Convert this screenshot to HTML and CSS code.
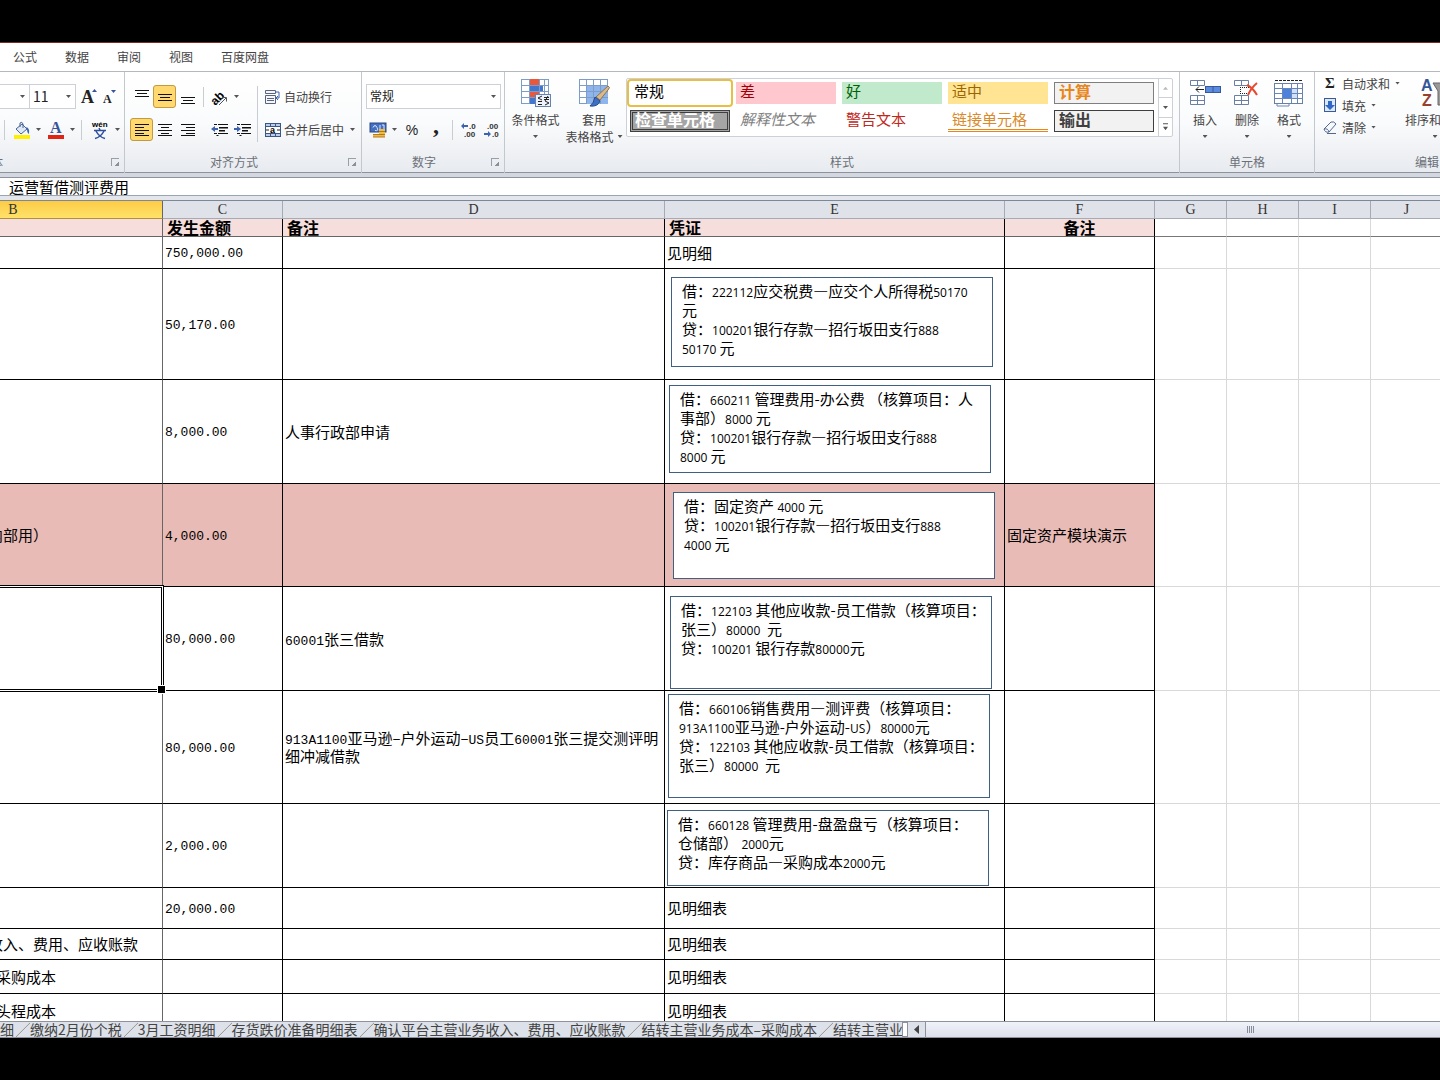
FILE: index.html
```html
<!DOCTYPE html>
<html lang="zh-CN">
<head>
<meta charset="utf-8">
<title>运营暂借测评费用</title>
<link rel="stylesheet" href="styles.css">
</head>
<body>
<div class="window">
  <nav class="menu">
    <a href="#">公式</a><a href="#">数据</a><a href="#">审阅</a><a href="#">视图</a><a href="#">百度网盘</a>
  </nav>

  <div class="ribbon">
    <section class="group g-font">
      <div class="rows">
        <div class="row">
          <span class="combo combo-face"><select aria-label="字体"><option></option></select><i class="caret"></i></span>
          <span class="combo combo-size"><select aria-label="字号"><option>11</option></select><i class="caret"></i></span>
          <button class="tool" aria-label="增大字号"><svg width="18" height="18"><text x="1" y="15" class="glyph-a" font-size="18">A</text><path d="M12 4l2.500-3 2.500 3z" fill="#35549a"/></svg></button>
          <button class="tool" aria-label="减小字号"><svg width="16" height="18"><text x="1" y="15" class="glyph-a" font-size="12">A</text><path d="M9 2h5l-2.500 3z" fill="#35549a"/></svg></button>
        </div>
        <div class="row">
          <i class="sep"></i>
          <button class="tool split" aria-label="填充颜色"><svg width="18" height="18"><path d="M3 8l6-5 5 5-6 5z" fill="#dfe8f5" stroke="#4a6496"/><path d="M7 6V2q2-2 3 1v4" fill="none" stroke="#4a6496"/><path d="M13 6q4 1 3 7q-2-1-2-5z" fill="#3565b5"/><rect x="1" y="14" width="16" height="4" fill="#ffef00"/></svg><i class="caret"></i></button>
          <button class="tool split" aria-label="字体颜色"><svg width="18" height="18"><text x="3" y="12" class="glyph-a blue" font-size="16">A</text><rect x="1" y="14" width="16" height="4" fill="#e02313"/></svg><i class="caret"></i></button>
          <i class="sep"></i>
          <button class="tool split" aria-label="拼音指南"><svg width="20" height="18"><text x="2" y="6" font-size="8" font-weight="bold" class="latin">wén</text><path d="M9 7l1 2M4 9.500h12M6 10q3 6 9 7.500M14 10q-3 6-9 7.500" fill="none" stroke="#2c4f9e" stroke-width="1.500"/></svg><i class="caret"></i></button>
        </div>
      </div>
      <footer class="caption cut">体<i class="launch"></i></footer>
    </section>

    <section class="group g-align">
      <div class="split-rows">
        <div class="rows">
          <div class="row">
            <button class="tool sq" aria-label="顶端对齐"><svg width="14" height="14"><path d="M0 .5h14M2 3.500h10M0 6.500h14" class="ln"/></svg></button>
            <button class="tool sq on" aria-label="垂直居中"><svg width="14" height="14"><path d="M0 4.500h14M2 7.500h10M0 10.500h14" class="ln"/></svg></button>
            <button class="tool sq" aria-label="底端对齐"><svg width="14" height="14"><path d="M0 7.500h14M2 10.500h10M0 13.500h14" class="ln"/></svg></button>
            <i class="sep"></i>
            <button class="tool split orient" aria-label="方向"><svg width="18" height="18"><text x="0" y="14" font-size="12" font-weight="bold" class="latin" transform="rotate(-45 7 11)">ab</text><path d="M8 17l7-7M11 9.500h4.500v4" fill="none" stroke="#555"/></svg><i class="caret"></i></button>
          </div>
          <div class="row">
            <button class="tool sq on" aria-label="左对齐"><svg width="14" height="14"><path d="M0 1.500h14M0 4.500h9M0 7.500h14M0 10.500h9M0 12.500h14" class="ln"/></svg></button>
            <button class="tool sq" aria-label="居中"><svg width="14" height="14"><path d="M0 1.500h14M3 4.500h8M0 7.500h14M3 10.500h8M0 12.500h14" class="ln"/></svg></button>
            <button class="tool sq" aria-label="右对齐"><svg width="14" height="14"><path d="M0 1.500h14M5 4.500h9M0 7.500h14M5 10.500h9M0 12.500h14" class="ln"/></svg></button>
            <i class="space"></i>
            <button class="tool sq" aria-label="减少缩进量"><svg width="17" height="14"><path d="M3 1.500h3M7 1.500h10M8 4.500h9M8 7.500h6M3 10.500h3M7 10.500h10M5.500 12.500h2" class="ln"/><path d="M8 5h9M8 8h6" class="ln"/><path d="M0 6l4-3v2h3v2H4v2z" fill="#3b63b0"/></svg></button>
            <button class="tool sq" aria-label="增加缩进量"><svg width="17" height="14"><path d="M3 1.500h3M7 1.500h10M8 4.500h9M8 7.500h6M3 10.500h3M7 10.500h10M5.500 12.500h2" class="ln"/><path d="M8 5h9M8 8h6" class="ln"/><path d="M7 6L3 3v2H0v2h3v2z" fill="#3b63b0"/></svg></button>
          </div>
        </div>
        <i class="sep tall"></i>
        <div class="rows">
          <div class="row"><button class="tool wide"><svg width="16" height="16"><path d="M.5 1.500h10v3H.5zM.5 6.500h10v8H.5z" fill="#f4f6fa" stroke="#59647a"/><path d="M2 9.500h7M2 11.500h7" stroke="#59647a"/><path d="M10 3h4v6h-3M13 7l-2 2 2 2" fill="none" stroke="#3b63b0"/></svg>自动换行</button></div>
          <div class="row"><button class="tool wide"><svg width="16" height="16"><rect x=".5" y="1.500" width="15" height="13" fill="#b9cdec" stroke="#3d5583"/><path d="M0 4.500h16M0 11.500h16M5.500 1v4M10.500 1v4M5.500 11v4M10.500 11v4" stroke="#3d5583"/><rect x="1" y="5" width="14" height="6" fill="#fff"/><path d="M1 8h3M12 8h3" stroke="#222"/><text x="5" y="11" font-size="9" font-weight="bold" class="latin">a</text></svg>合并后居中<i class="caret"></i></button></div>
        </div>
      </div>
      <footer class="caption">对齐方式<i class="launch"></i></footer>
    </section>

    <section class="group g-number">
      <div class="rows">
        <div class="row">
          <span class="combo combo-num"><select aria-label="数字格式"><option>常规</option></select><i class="caret"></i></span>
        </div>
        <div class="row">
          <button class="tool split" aria-label="会计数字格式"><svg width="18" height="17"><rect x="1" y="2" width="16" height="9" fill="#4470c4" stroke="#29477f"/><path d="M4 6.500q2-4 4 0t-2 3M11 4v5M13 4h2v4" fill="none" stroke="#dce8ff"/><path d="M10 8h6v8h-6zM4 13h6v3H4z" fill="#eebb45"/><path d="M4 13.500h6M4 16h12M10 10.500h6M10 13.500h6" fill="none" stroke="#b47a1a"/></svg><i class="caret"></i></button>
          <button class="tool pct" aria-label="百分比样式">%</button>
          <button class="tool comma" aria-label="千位分隔样式">,</button>
          <i class="sep"></i>
          <button class="tool sq" aria-label="增加小数位数"><svg width="17" height="14"><text x="9" y="6" class="dec">.0</text><text x="4" y="14" class="dec">.00</text><path d="M1 3l3-3v2h4v2H4v2z" fill="#3b63b0"/></svg></button>
          <button class="tool sq" aria-label="减少小数位数"><svg width="17" height="14"><text x="4" y="6" class="dec">.00</text><text x="9" y="14" class="dec">.0</text><path d="M8 11L5 8v2H1v2h4v2z" fill="#3b63b0"/></svg></button>
        </div>
      </div>
      <footer class="caption">数字<i class="launch"></i></footer>
    </section>

    <section class="group g-styles">
      <div class="bigs">
        <button class="big cond"><svg width="30" height="29"><rect x=".5" y=".5" width="27" height="24" fill="#fff" stroke="#7d9cc8"/><path d="M9 0h10v6H9zM9 12h10v6H9z" fill="#e9573d"/><path d="M9 6h13v6H9zM9 18h6v7H9z" fill="#4377cf"/><path d="M0 6.500h28M0 12.500h28M0 18.500h28M8.500 0v25M18.500 0v25M23.500 0v25" stroke="#7d9cc8"/><rect x="14.500" y="15.500" width="15" height="12" fill="#eef3fb" stroke="#6682ae"/><path d="M21 17l-4 2 4 2M17 22.500h4M17 25.500h4M23 18.500h5M23 20.500h5M27 17l-3 5M24 22l4 2-4 2" fill="none" stroke="#222"/></svg><span>条件格式</span><i class="caret"></i></button>
        <button class="big tbl"><svg width="31" height="29"><rect x=".5" y=".5" width="28" height="24" fill="#fff" stroke="#7d9cc8"/><path d="M7 6h22v19H7z" fill="#8fb6ec"/><path d="M0 6.500h29M0 12.500h29M0 18.500h29M7.500 0v25M14.500 0v25M21.500 0v25" stroke="#7d9cc8"/><path d="M29 7q3 1 0 4l-8 10-4-3z" fill="#d9b98a" stroke="#8a7453"/><path d="M16 18l5 4q-2 6-10 5q4-3 5-9z" fill="#3f6fc2" stroke="#274a8d"/></svg><span>套用</span><span>表格格式<i class="caret"></i></span></button>
      </div>
      <div class="gallery">
        <div class="swatches">
          <button class="sw sel">常规</button><button class="sw bad">差</button><button class="sw good">好</button><button class="sw mid">适中</button><button class="sw calc">计算</button>
          <button class="sw check">检查单元格</button><button class="sw expl">解释性文本</button><button class="sw warn">警告文本</button><button class="sw link">链接单元格</button><button class="sw out">输出</button>
        </div>
        <div class="spin"><button aria-label="上一行"><i class="caret up"></i></button><button aria-label="下一行"><i class="caret"></i></button><button aria-label="其他"><i class="caret more"></i></button></div>
      </div>
      <footer class="caption">样式</footer>
    </section>

    <section class="group g-cells">
      <div class="bigs">
        <button class="big"><svg width="31" height="29"><path d="M.5 1.500h14v5H.5zM7.500 1v5M.5 16.500h14v9H.5zM7.500 16v10M0 21.500h15" fill="#fff" stroke="#6a7fa5"/><rect x="15.500" y="7.500" width="15" height="6" fill="#5b8bdc" stroke="#34599f"/><path d="M23 7v7" stroke="#34599f"/><path d="M6 10.500h8M9 7.500l-3 3 3 3" fill="none" stroke="#222"/></svg><span>插入</span><i class="caret"></i></button>
        <button class="big"><svg width="26" height="29"><path d="M.5 1.500h14v5H.5zM7.500 1v5M.5 16.500h14v9H.5zM7.500 16v10M0 21.500h15" fill="#fff" stroke="#6a7fa5"/><path d="M6 8.500h9M6 14.500h9M6.500 8v7" stroke="#222" stroke-dasharray="1 1"/><path d="M13 6q6 3 10 10M23 4q-6 5-9 12" fill="none" stroke="#e7492f" stroke-width="2"/></svg><span>删除</span><i class="caret"></i></button>
        <button class="big"><svg width="30" height="29"><path d="M1 1.500h28" stroke="#222" stroke-dasharray="3 1"/><rect x=".5" y="4.500" width="28" height="20" fill="#fff" stroke="#6a7fa5"/><path d="M8 9h16v11H8z" fill="#cfe0f8"/><path d="M9 9h8v11H9z" fill="#4d82dc"/><path d="M0 9.500h29M0 14.500h8M17 14.500h12M0 19.500h29M8.500 4v20M17.500 4v20M23.500 4v20M3 24v3h12v-3" fill="none" stroke="#6a86b8"/></svg><span>格式</span><i class="caret"></i></button>
      </div>
      <footer class="caption">单元格</footer>
    </section>

    <section class="group g-edit">
      <div class="edits">
        <div class="list">
          <button class="tool line"><svg width="14" height="14"><text x="2" y="12" font-size="15" class="glyph-a">Σ</text></svg>自动求和<i class="caret"></i></button>
          <button class="tool line"><svg width="14" height="14"><rect x="1.500" y=".5" width="11" height="13" fill="#dce8fa" stroke="#3b5b96"/><path d="M5 3h4v4h3l-5 5-5-5h3z" fill="#2f67c7"/></svg>填充<i class="caret"></i></button>
          <button class="tool line"><svg width="14" height="14"><path d="M1 9l7-7q3-1 5 2l-7 8q-4 1-5-3z" fill="#f6f9fe" stroke="#55688c"/><path d="M1 9q4-1 5 3M4 13.500h9" fill="none" stroke="#55688c"/></svg>清除<i class="caret"></i></button>
        </div>
        <button class="big sort"><svg width="30" height="29"><text x="1" y="12" font-size="16" font-weight="bold" class="latin blue">A</text><text x="2" y="27" font-size="16" font-weight="bold" class="latin" fill="#974030">Z</text><path d="M13 4h15l-5 8v14h-5V12z" fill="#9a9a9a" stroke="#666"/></svg><span>排序和筛选</span><i class="caret"></i></button>
      </div>
      <footer class="caption">编辑</footer>
    </section>
  </div>

  <div class="formula"><input type="text" aria-label="编辑栏" value="运营暂借测评费用"></div>

  <main class="sheet">
    <table>
      <colgroup><col class="cb"><col class="cc"><col class="cd"><col class="ce"><col class="cf"><col class="cg"><col class="cg"><col class="cg"><col class="cg"></colgroup>
      <thead>
        <tr class="letters"><th class="cur">B</th><th>C</th><th>D</th><th>E</th><th>F</th><th>G</th><th>H</th><th>I</th><th>J</th></tr>
        <tr class="titles"><th></th><th>发生金额</th><th>备注</th><th>凭证</th><th class="mid">备注</th><td></td><td></td><td></td><td></td></tr>
      </thead>
      <tbody>
        <tr class="h32"><td></td><td class="num">750,000.00</td><td></td><td>见明细</td><td></td><td></td><td></td><td></td><td></td></tr>
        <tr class="h111"><td></td><td class="num">50,170.00</td><td></td><td><div class="note n1">借：<b>222112</b>应交税费—应交个人所得税<b>50170</b><br>元<br>贷：<b>100201</b>银行存款—招行坂田支行<b>888</b><br><b>50170 </b> 元</div></td><td></td><td></td><td></td><td></td><td></td></tr>
        <tr class="h104"><td></td><td class="num">8,000.00</td><td>人事行政部申请</td><td><div class="note n2">借：<b>660211</b> 管理费用-办公费 （核算项目：人<br>事部）<b>8000</b> 元<br>贷：<b>100201</b>银行存款—招行坂田支行<b>888</b><br><b>8000 </b> 元</div></td><td></td><td></td><td></td><td></td><td></td></tr>
        <tr class="h103 hot"><td class="tail">内部用）</td><td class="num">4,000.00</td><td></td><td><div class="note n3">借：固定资产 <b>4000</b> 元<br>贷：<b>100201</b>银行存款—招行坂田支行<b>888</b><br><b>4000 </b> 元</div></td><td>固定资产模块演示</td><td></td><td></td><td></td><td></td></tr>
        <tr class="h104"><td class="active"></td><td class="num">80,000.00</td><td><span class="mono">60001</span>张三借款</td><td><div class="note n4">借：<b>122103</b> 其他应收款-员工借款（核算项目：<br>张三）<b>80000</b>&nbsp; 元<br>贷：<b>100201 </b> 银行存款<b>80000</b>元</div></td><td></td><td></td><td></td><td></td><td></td></tr>
        <tr class="h113"><td></td><td class="num">80,000.00</td><td><span class="mono">913A1100</span>亚马逊–户外运动–<span class="mono">US</span>员工<span class="mono">60001</span>张三提交测评明<br>细冲减借款</td><td><div class="note n5">借：<b>660106</b>销售费用—测评费（核算项目：<br><b>913A1100</b>亚马逊-户外运动-<b>US</b>）<b>80000</b>元<br>贷：<b>122103</b> 其他应收款-员工借款（核算项目：<br>张三）<b>80000</b>&nbsp; 元</div></td><td></td><td></td><td></td><td></td><td></td></tr>
        <tr class="h84"><td></td><td class="num">2,000.00</td><td></td><td><div class="note n6">借：<b>660128</b> 管理费用-盘盈盘亏（核算项目：<br>仓储部） <b>2000</b>元<br>贷：库存商品—采购成本<b>2000</b>元</div></td><td></td><td></td><td></td><td></td><td></td></tr>
        <tr class="h41"><td></td><td class="num">20,000.00</td><td></td><td>见明细表</td><td></td><td></td><td></td><td></td><td></td></tr>
        <tr class="h31"><td>确认平台主营业务收入、费用、应收账款</td><td></td><td></td><td>见明细表</td><td></td><td></td><td></td><td></td><td></td></tr>
        <tr class="h34"><td>结转主营业务成本–采购成本</td><td></td><td></td><td>见明细表</td><td></td><td></td><td></td><td></td><td></td></tr>
        <tr class="h34"><td>结转主营业务成本–头程成本</td><td></td><td></td><td>见明细表</td><td></td><td></td><td></td><td></td><td></td></tr>
      </tbody>
    </table>
  </main>

  <div class="bottom">
    <nav class="tabs">
      <a href="#" class="first">明细</a><a href="#">缴纳2月份个税</a><a href="#">3月工资明细</a><a href="#">存货跌价准备明细表</a><a href="#">确认平台主营业务收入、费用、应收账款</a><a href="#">结转主营业务成本–采购成本</a><a href="#">结转主营业务</a>
    </nav>
    <i class="splitter"></i>
    <button class="left" aria-label="向左滚动"><i class="caret west"></i></button>
    <div class="track"><div class="thumb"><i class="grip"></i></div></div>
  </div>
</div>
</body>
</html>
```
FILE: styles.css
```css
* { box-sizing: border-box; }

body {
  margin: 0;
  background: #000;
  font-family: "Noto Sans CJK SC", sans-serif;
  font-size: 12px;
  color: #444;
}

button, select, input { font: inherit; color: inherit; margin: 0; }
button { background: none; border: 0; padding: 0; white-space: nowrap; }
svg { display: block; flex: none; overflow: visible; }
a { color: inherit; text-decoration: none; }

.window {
  height: 100vh;
  padding: 42px 0;
  display: flex;
  flex-direction: column;
  overflow: hidden;
}

/* ribbon tabs */
.menu {
  flex: none;
  height: 30px;
  padding: 0 0 2px 13px;
  display: flex;
  align-items: center;
  gap: 28px;
  background: #fff;
  border-top: 1px solid #7c2a2a;
  border-bottom: 1px solid #b5b8bd;
}

/* ribbon */
.ribbon {
  flex: none;
  display: flex;
  height: 105px;
  border-bottom: 4px solid #d3d7df;
  background: linear-gradient(#fff, #fafbfc 50%, #e7eaef);
  box-shadow: inset 0 -1px #8d929c;
  overflow: hidden;
}
.group {
  flex: none;
  display: flex;
  flex-wrap: wrap;
  align-content: space-between;
  border-right: 1px solid #c3c7ce;
  overflow: hidden;
}
.g-font { width: 125px; }
.g-align { width: 237px; }
.g-number { width: 143px; }
.g-styles { width: 675px; }
.g-cells { width: 135px; }
.g-edit { flex: 1 0 126px; border-right: 0; min-width: 0; }

.caption {
  flex: 0 0 100%;
  height: 21px;
  padding-bottom: 2px;
  display: flex;
  justify-content: center;
  align-items: center;
  color: #6b7078;
}
.caption.cut { justify-content: flex-start; text-indent: -9px; }
.caption .launch { margin-left: auto; }
.g-align .caption { padding-left: 85px; }
.g-number .caption { padding-left: 50px; }
.g-edit .caption { justify-content: flex-start; padding-left: 100px; white-space: nowrap; }
.launch {
  width: 8px;
  height: 8px;
  margin-right: 5px;
  border: 1px solid #9a9ea8;
  border-width: 1px 0 0 1px;
  background: linear-gradient(135deg, transparent 65%, #8b9099 65%);
}

.rows { display: flex; flex-direction: column; gap: 8px; padding-top: 12px; }
.row { display: flex; align-items: center; height: 25px; }
.split-rows { display: flex; }
.g-align .split-rows { padding-left: 5px; }
.g-number .rows { padding-left: 4px; }

.sep { width: 1px; height: 20px; margin: 0 4px; background: #c9ccd2; }
.sep.tall { height: 56px; margin: 14px 7px 0 3px; }
.space { width: 9px; }

.caret {
  width: 5px;
  height: 3px;
  flex: none;
  background: #555;
  clip-path: polygon(0 0, 100% 0, 50% 100%);
}
.caret.up { background: #bbb; clip-path: polygon(50% 0, 100% 100%, 0 100%); }
.caret.more { height: 7px; clip-path: polygon(0 0, 100% 0, 100% 14%, 0 14%, 0 50%, 100% 50%, 50% 100%, 0 50%); }
.caret.west { width: 5px; height: 9px; background: #444; clip-path: polygon(100% 0, 100% 100%, 0 50%); }

.combo {
  display: flex;
  align-items: center;
  height: 25px;
  padding-right: 4px;
  border: 1px solid #cdd0d6;
  background: #fff;
}
.combo select { appearance: none; flex: 1; min-width: 0; border: 0; padding: 0 3px 2px; background: none; color: #222; }
.combo-face { width: 29px; border-left: 0; border-right: 0; }
.combo-size { width: 47px; margin-right: 4px; }
.combo-size select { font-size: 14px; line-height: 18px; }
.combo-num { width: 135px; }

.tool { display: flex; align-items: center; justify-content: center; height: 23px; }
.tool.sq { width: 23px; }
.tool.on { background: #ffd96f; border: 1px solid #c29a3f; border-radius: 3px; }
.tool.split { gap: 5px; padding: 0 3px; }
.tool.wide { gap: 3px; }
.tool.wide .caret { margin-left: 3px; }
.g-font .row .tool { margin-right: 4px; }
.g-font .row .tool.split { margin-right: 0; padding: 0 2px 0 4px; }
.tool.pct { width: 24px; font-family: "Liberation Sans", sans-serif; font-size: 14px; color: #222; }
.tool.comma { width: 24px; padding-bottom: 8px; font-family: "Liberation Serif", serif; font-size: 24px; font-weight: bold; color: #222; }

.ln { stroke: #111; fill: none; }
.glyph-a { font-family: "Liberation Serif", serif; font-weight: bold; fill: #222; }
.latin { font-family: "Liberation Sans", sans-serif; }
.blue { fill: #35549a; }
.dec { font-family: "Liberation Sans", sans-serif; font-size: 8px; font-weight: bold; fill: #333; }

/* large ribbon buttons */
.bigs { display: flex; padding-top: 7px; }
.big { display: flex; flex-direction: column; align-items: center; width: 42px; line-height: 17px; }
.big svg { margin-bottom: 3px; }
.big > .caret { margin-top: 7px; }
.big span { display: flex; align-items: center; }
.big.cond { width: 61px; }
.big.tbl { width: 56px; margin-right: 4px; }
.big.tbl span .caret { margin-left: 4px; }
.g-cells .bigs { padding-left: 4px; }

/* style gallery */
.gallery {
  display: flex;
  height: 59px;
  margin-top: 6px;
  border: 1px solid #cdd0d6;
  border-radius: 2px;
  background: #fff;
}
.swatches {
  display: grid;
  grid-template-columns: repeat(5, 100px);
  grid-auto-rows: 22px;
  gap: 6px;
  padding: 3px 4px 0 3px;
}
.sw { text-align: left; padding: 0 0 4px 4px; font-size: 15px; line-height: 18px; color: #000; }
.sw.sel { background: #fff; outline: 2px solid #e8bf45; outline-offset: 1px; border-radius: 1px; }
.sw.bad { background: #ffc7ce; color: #9c0006; }
.sw.good { background: #c1e9cb; color: #006100; }
.sw.mid { background: #ffe493; color: #9c6500; }
.sw.calc { background: #f2f2f2; border: 1px solid #7f7f7f; color: #e8861a; font-size: 16px; font-weight: bold; line-height: 16px; }
.sw.check { background: #a5a5a5; border: 3px double #3f3f3f; color: #fff; font-size: 16px; font-weight: bold; line-height: 12px; padding: 0 0 4px 2px; }
.sw.expl { color: #7f7f7f; font-style: italic; }
.sw.warn { color: #c0281c; }
.sw.link { color: #d98a2b; border-bottom: 3px double #e8861a; padding-bottom: 1px; }
.sw.out { background: #f2f2f2; border: 1px solid #3f3f3f; color: #3f3f3f; font-size: 16px; font-weight: bold; line-height: 16px; }
.spin { display: flex; flex-direction: column; width: 14px; border-left: 1px solid #cdd0d6; }
.spin button { flex: 1; display: flex; align-items: center; justify-content: center; }
.spin button + button { border-top: 1px solid #cdd0d6; }

/* editing group */
.edits { display: flex; flex: 0 0 100%; padding-left: 8px; }
.list { display: flex; flex-direction: column; align-items: flex-start; width: 78px; }
.tool.line { height: 22px; gap: 5px; }
.big.sort { flex: none; width: 68px; padding-top: 7px; }

/* formula bar */
.formula {
  flex: none;
  height: 23px;
  background: #fff;
  border-top: 1px solid #8d929c;
  border-bottom: 4px solid #e3e6ec;
  box-shadow: inset 0 -1px #9aa5b3;
}
.formula input { display: block; width: 100%; height: 18px; border: 0; padding: 0 9px 2px; background: none; font-size: 15px; color: #000; outline: 0; }

/* worksheet, scrolled part of column B out of view */
.sheet {
  flex: 1;
  min-height: 0;
  overflow: hidden;
  background: #fff;
  border-top: 1px solid #7c8798;
}
table {
  width: 1579px;
  margin-left: -136px;
  table-layout: fixed;
  border-collapse: separate;
  border-spacing: 0;
  font-size: 15px;
  line-height: 18px;
  color: #000;
}
.cb { width: 299px; }
.cc { width: 120px; }
.cd { width: 382px; }
.ce { width: 340px; }
.cf { width: 150px; }
.cg { width: 72px; }

td, th {
  padding: 0 0 0 2px;
  border: 0 solid #000;
  border-width: 0 1px 1px 0;
  text-align: left;
  vertical-align: middle;
  white-space: nowrap;
}
td:first-child { padding-left: 4px; }
td:first-child, th:first-child { border-right-color: #666; }
td:nth-child(n+6) { border-color: #d9d9d9; }
td:nth-child(4) { position: relative; }

.letters th {
  height: 18px;
  padding: 0;
  background: #dfe2e8;
  border-color: #a5abb5;
  text-align: center;
  font-family: "Liberation Serif", serif;
  font-size: 14px;
  font-weight: normal;
  line-height: 16px;
  color: #333;
}
.letters .cur { background: linear-gradient(#fccb45, #ffe269); border-color: #b58f3a; border-right-color: #666; }
.titles th { height: 18px; background: #f5dedb; font-size: 16px; line-height: 14px; padding: 0 0 2px 4px; border-bottom-color: #666; }
.titles td:nth-child(n+6) { border-bottom-color: #777; }
.titles .mid { text-align: center; padding-left: 0; }

.h31 { height: 31px; }
.h32 { height: 32px; }
.h34 { height: 34px; }
.h41 { height: 41px; }
.h84 { height: 84px; }
.h103 { height: 103px; }
.h104 { height: 104px; }
.h111 { height: 111px; }
.h113 { height: 113px; }

.num, .mono { font-family: "Liberation Mono", monospace; font-size: 13px; }
.num { padding-top: 3px; }
.mono { line-height: 1px; }
.hot td:nth-child(-n+5) { background: #e9bbb6; }
td.tail { padding-left: 124px; }
.active { position: relative; }
.active::before {
  content: "";
  position: absolute;
  z-index: 1;
  inset: -2px -2px -2px -4px;
  border: 1px solid #000;
  box-shadow: inset 0 0 0 1px #fff, inset 0 0 0 2px #000;
}
.active::after {
  content: "";
  position: absolute;
  z-index: 2;
  right: -4px;
  bottom: -4px;
  width: 7px;
  height: 7px;
  background: #000;
  border: 1px solid #fff;
}

/* text boxes floating over the cells */
.note {
  position: absolute;
  width: 322px;
  padding: 3px 0 0 10px;
  border: 1px solid #3f5f83;
  background: #fff;
  line-height: 19px;
}
.note b { font-family: "Open Sans", sans-serif; font-size: 12px; font-weight: normal; line-height: 1px; }
.n1 { left: 6px; top: 8px; height: 90px; }
.n2 { left: 4px; top: 5px; height: 88px; }
.n3 { left: 8px; top: 8px; height: 87px; }
.n4 { left: 5px; top: 9px; height: 93px; }
.n5 { left: 3px; top: 3px; height: 104px; }
.n6 { left: 2px; top: 6px; height: 76px; }

/* sheet tabs and horizontal scroll bar */
.bottom {
  flex: none;
  display: flex;
  height: 17px;
  border-top: 1px solid #8d929c;
  border-bottom: 1px solid #8d929c;
  background: #dde1e9;
}
.tabs { flex: none; width: 902px; display: flex; overflow: hidden; font-size: 14px; line-height: 14px; color: #444; }
.tabs a { flex: none; padding-right: 16px; white-space: nowrap; background: linear-gradient(135deg, transparent 46%, #fff 46%, #999 52%, transparent 54%) right / 14px 100% no-repeat; }
.tabs .first { margin-left: -14px; }
.splitter { width: 6px; border: 1px solid #8d929c; background: #fff; }
.left { width: 17px; display: flex; align-items: center; justify-content: center; }
.track { flex: 1; min-width: 0; overflow: hidden; }
.thumb { width: 650px; height: 15px; display: flex; align-items: center; justify-content: center; border-left: 1px solid #8d929c; background: linear-gradient(#f1f3fa, #dcdfe9); }
.grip { width: 7px; height: 7px; background: repeating-linear-gradient(90deg, #858b99 0 1px, transparent 1px 2px); }
```
